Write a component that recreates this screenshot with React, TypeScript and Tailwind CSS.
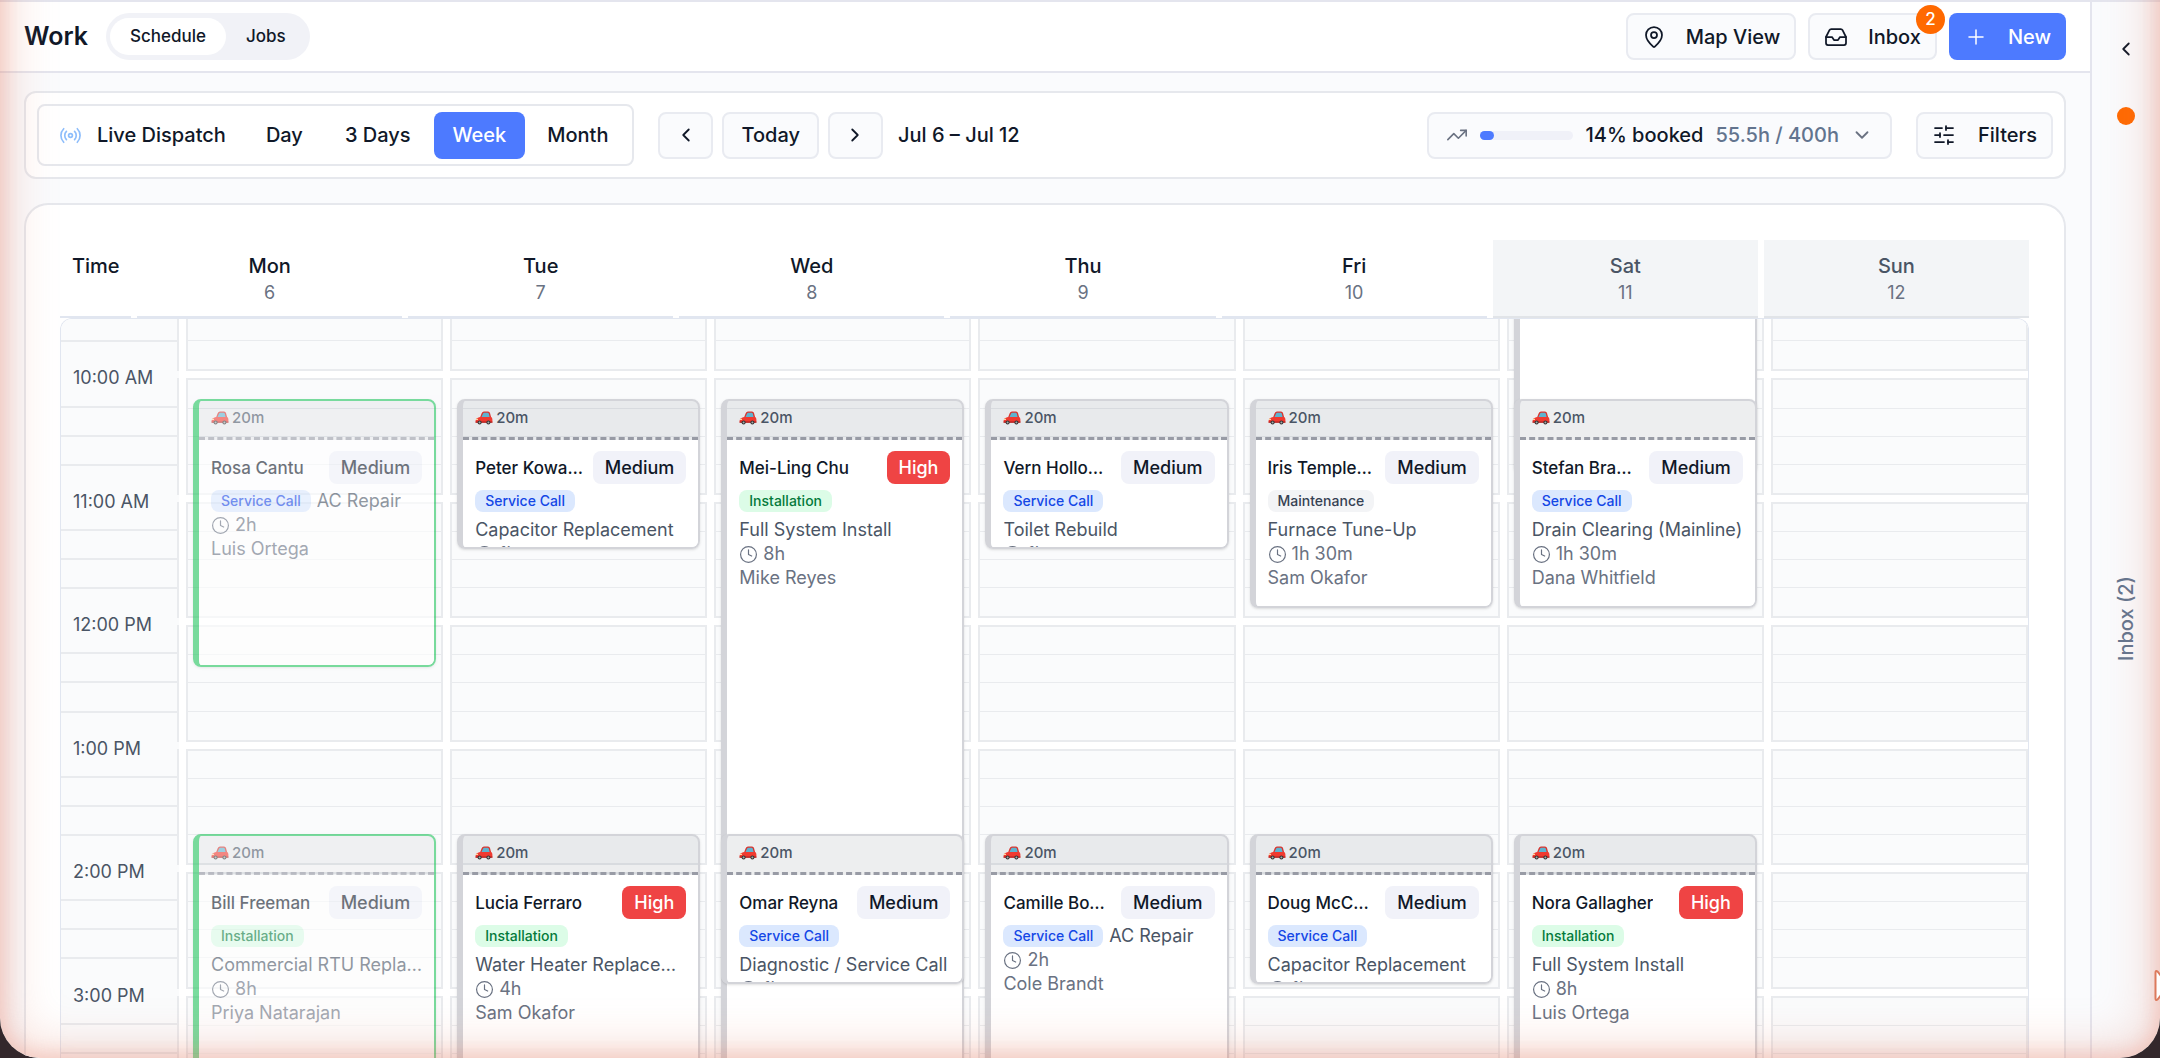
import type { ReactNode } from "react";
import { ChevronDown, ChevronLeft, ChevronRight, Clock, Inbox, MapPin, Plus, Radio, SlidersHorizontal, TrendingUp } from "lucide-react";

type Kind = "Service Call" | "Installation" | "Maintenance";

interface Job {
    customer: string;
    priority: "Medium" | "High";
    kind: Kind;
    title: string;
    inline?: boolean;
    tech: string;
    start: number;
    hours: number;
    done?: boolean;
}

interface Day {
    name: string;
    date: number;
    weekend?: boolean;
    jobs: Job[];
}

const FIRST_HOUR = 9;
const HOURS = 7;
const GRID_HEIGHT = 864;
const HOUR_HEIGHT = GRID_HEIGHT / HOURS;
const SLOTS_HEIGHT = 118;
const TRAVEL_HEIGHT = 41;

const days: Day[] = [
    {
        name: "Mon",
        date: 6,
        jobs: [
            { customer: "Rosa Cantu", priority: "Medium", kind: "Service Call", title: "AC Repair", inline: true, tech: "Luis Ortega", start: 10.5, hours: 2, done: true },
            { customer: "Bill Freeman", priority: "Medium", kind: "Installation", title: "Commercial RTU Replacement", tech: "Priya Natarajan", start: 14, hours: 8, done: true },
        ],
    },
    {
        name: "Tue",
        date: 7,
        jobs: [
            { customer: "Peter Kowarski", priority: "Medium", kind: "Service Call", title: "Capacitor Replacement", tech: "Mike Reyes", start: 10.5, hours: 1 },
            { customer: "Lucia Ferraro", priority: "High", kind: "Installation", title: "Water Heater Replacement", tech: "Sam Okafor", start: 14, hours: 4 },
        ],
    },
    {
        name: "Wed",
        date: 8,
        jobs: [
            { customer: "Mei-Ling Chu", priority: "High", kind: "Installation", title: "Full System Install", tech: "Mike Reyes", start: 10.5, hours: 8 },
            { customer: "Omar Reyna", priority: "Medium", kind: "Service Call", title: "Diagnostic / Service Call", tech: "Cole Brandt", start: 14, hours: 1 },
        ],
    },
    {
        name: "Thu",
        date: 9,
        jobs: [
            { customer: "Vern Hollomon", priority: "Medium", kind: "Service Call", title: "Toilet Rebuild", tech: "Dana Whitfield", start: 10.5, hours: 1 },
            { customer: "Camille Bowman", priority: "Medium", kind: "Service Call", title: "AC Repair", inline: true, tech: "Cole Brandt", start: 14, hours: 2 },
        ],
    },
    {
        name: "Fri",
        date: 10,
        jobs: [
            { customer: "Iris Templeman", priority: "Medium", kind: "Maintenance", title: "Furnace Tune-Up", tech: "Sam Okafor", start: 10.5, hours: 1.5 },
            { customer: "Doug McCormick", priority: "Medium", kind: "Service Call", title: "Capacitor Replacement", tech: "Luis Ortega", start: 14, hours: 1 },
        ],
    },
    {
        name: "Sat",
        date: 11,
        weekend: true,
        jobs: [
            { customer: "Hank Dillard", priority: "Medium", kind: "Installation", title: "Full System Install", tech: "Mike Reyes", start: 7, hours: 4 },
            { customer: "Stefan Brammer", priority: "Medium", kind: "Service Call", title: "Drain Clearing (Mainline)", tech: "Dana Whitfield", start: 10.5, hours: 1.5 },
            { customer: "Nora Gallagher", priority: "High", kind: "Installation", title: "Full System Install", tech: "Luis Ortega", start: 14, hours: 8 },
        ],
    },
    { name: "Sun", date: 12, weekend: true, jobs: [] },
];

const hours = Array.from({ length: HOURS }, (_, i) => FIRST_HOUR + i);

const kindClass: Record<Kind, string> = {
    "Service Call": "bg-[#dbe8fe] text-[#1447e6]",
    Installation: "bg-[#dcfce7] text-[#047a3b]",
    Maintenance: "bg-[#f3f4f6] text-[#364153]",
};

const formatHour = (h: number) => `${h > 12 ? h - 12 : h}:00 ${h < 12 ? "AM" : "PM"}`;

const formatDuration = (h: number) => (h % 1 ? `${Math.floor(h)}h 30m` : `${h}h`);

function OutlineButton({ children, className, label }: { children: ReactNode; className: string; label?: string }) {
    return (
        <button
            aria-label={label}
            className={`flex h-[47px] items-center rounded-lg border-2 border-[#e9ebf1] bg-[#fafbfd] text-[20px] font-medium ${className}`}
        >
            {children}
        </button>
    );
}

function CarIcon() {
    return (
        <svg viewBox="0 0 18 14" className="h-[14px] w-[18px]">
            <path d="M5 6.5 6.8 2Q7.4.5 9 .5h4Q14.6.5 15 2l1.2 4.5Z" fill="#d9352f" />
            <path d="M6.4 6.2 8 2.7Q8.4 1.8 9.2 1.8h3.5q.9 0 1.1.9l.9 3.5Z" fill="#5fb3cf" />
            <path d="M.6 9.5Q.8 7.2 3.5 6.6L5 6h11.2q1.2.7 1.2 2.4v3H.6Z" fill="#f03a30" />
            <path d="M.6 10.6h16.8v1.1H.6Z" fill="#b0201f" />
            <path d="M1 7.8h2V9H1Z" fill="#ffd9a0" />
            <circle cx="4.6" cy="11.5" r="2" fill="#333" />
            <circle cx="4.6" cy="11.5" r="1" fill="#aaa" />
            <circle cx="13.4" cy="11.5" r="2" fill="#333" />
            <circle cx="13.4" cy="11.5" r="1" fill="#aaa" />
        </svg>
    );
}

function JobCard({ job }: { job: Job }) {
    const fullHours = Math.floor(job.start - FIRST_HOUR);
    const top = Math.round(fullHours * HOUR_HEIGHT + (job.start % 1) * SLOTS_HEIGHT) + 3 - TRAVEL_HEIGHT;
    const height = TRAVEL_HEIGHT + job.hours * SLOTS_HEIGHT - 9;

    return (
        <div
            className={`absolute inset-x-[7px] flex flex-col overflow-hidden rounded-lg border-2 border-l-[6px] shadow-sm ${job.done ? "border-[#22c55e] opacity-60" : "border-[#d3d4d9]"}`}
            style={{ top, height }}
        >
            <div className="flex h-[39px] shrink-0 items-center gap-[3px] border-b-[3px] border-dashed border-[#989ba5] bg-[#1e2939]/8 px-3 pb-[2px] text-[15px] font-medium text-[#4a5565]">
                <CarIcon />
                20m
            </div>
            <div className="flex-1 bg-white px-3 pt-[11px] text-[18px] leading-6 text-[#6a7282]">
                <div className="mb-[5px] flex items-center justify-between gap-2">
                    <h3 className="truncate text-[17px] font-medium text-[#101828]">{job.customer}</h3>
                    <span
                        className={`flex h-[33px] shrink-0 items-center rounded-lg px-3 font-medium ${job.priority === "High" ? "bg-[#ef4444] text-white" : "bg-[#f1f2f9] text-[#101828]"}`}
                    >
                        {job.priority}
                    </span>
                </div>
                <div className={job.inline ? "flex items-center gap-[6px]" : "-mr-1"}>
                    <div className={`flex items-center ${job.inline ? "h-6" : "h-[29px] pb-[5px]"}`}>
                        <span className={`flex h-[22px] items-center rounded-lg px-[10px] text-[14px] font-medium ${kindClass[job.kind]}`}>{job.kind}</span>
                    </div>
                    <p className="truncate text-[#4a5565]">{job.title}</p>
                </div>
                <p className="flex items-center gap-[5px]">
                    <Clock className="size-[19px]" strokeWidth={1.5} />
                    {formatDuration(job.hours)}
                </p>
                <p className="truncate">{job.tech}</p>
            </div>
        </div>
    );
}

function DayColumn({ day }: { day: Day }) {
    return (
        <div className="relative grid min-w-0 flex-1 grid-rows-7">
            {hours.map((h) => (
                <div key={h} className="pb-[7px]">
                    <div className="grid h-full grid-rows-4 divide-y divide-[#e9ebee] border-2 border-[#e9ebee] bg-[#fafbfc]">
                        <div />
                        <div />
                        <div />
                        <div />
                    </div>
                </div>
            ))}
            {day.jobs.map((job) => (
                <JobCard key={job.customer} job={job} />
            ))}
        </div>
    );
}

function TimeColumn() {
    return (
        <div className="grid w-[118px] shrink-0 grid-rows-7 bg-[#fafbfc]">
            {hours.map((h) => (
                <div key={h} className="relative pb-[7px]">
                    <div className="grid h-full grid-rows-4 divide-y-2 divide-[#e9ebee] border-r-2 border-[#e9ebee]">
                        <div />
                        <div />
                        <div />
                        <div />
                    </div>
                    <span className="absolute -top-3 left-3 text-[18px] leading-6 text-[#4a5565]">{formatHour(h)}</span>
                </div>
            ))}
        </div>
    );
}

function TopBar() {
    return (
        <header className="flex h-[73px] shrink-0 items-center border-t-2 border-b-2 border-[#e4e5ee] bg-white px-6">
            <h1 className="text-[25px] font-semibold">Work</h1>
            <nav className="ml-[18px] flex h-[47px] items-center rounded-full bg-[#f1f2f7] p-1 text-[17px] font-medium">
                <a href="#schedule" className="flex h-[37px] items-center rounded-full bg-white px-5">
                    Schedule
                </a>
                <a href="#jobs" className="flex h-[37px] items-center rounded-full px-5">
                    Jobs
                </a>
            </nav>
            <div className="ml-auto flex gap-3">
                <OutlineButton className="gap-[20px] px-[14px]">
                    <MapPin className="size-6" strokeWidth={1.75} />
                    Map View
                </OutlineButton>
                <div className="relative">
                    <OutlineButton className="gap-[20px] px-[14px]">
                        <Inbox className="size-6" strokeWidth={1.75} />
                        Inbox
                    </OutlineButton>
                    <span className="absolute -top-2 -right-2 flex size-[29px] items-center justify-center rounded-full bg-[#ff6900] text-[17px] font-medium text-white">
                        2
                    </span>
                </div>
                <button className="flex h-[47px] items-center gap-[20px] rounded-lg bg-[#4d7aff] px-[15px] text-[20px] font-medium text-white">
                    <Plus className="size-6" strokeWidth={1.5} />
                    New
                </button>
            </div>
        </header>
    );
}

function Toolbar() {
    return (
        <section className="flex h-[88px] items-center rounded-xl border-2 border-[#e6e8ed] bg-white px-[11px] text-[20px] font-medium">
            <div className="flex h-[62px] items-center gap-1 rounded-lg border-2 border-[#e6e8ed] px-[6px]">
                <button className="flex h-[47px] items-center gap-[15px] pr-[17px] pl-[14px]">
                    <Radio className="size-[23px] text-[#8dbdfb]" strokeWidth={1.75} />
                    Live Dispatch
                </button>
                <button className="h-[47px] px-[19px]">Day</button>
                <button className="h-[47px] px-[19px]">3 Days</button>
                <button className="h-[47px] rounded-lg bg-[#4d7aff] px-[19px] text-white">Week</button>
                <button className="h-[47px] px-[18px]">Month</button>
            </div>
            <div className="ml-6 flex items-center gap-[9px]">
                <OutlineButton className="w-[55px] justify-center" label="Previous week">
                    <ChevronLeft className="size-[22px]" />
                </OutlineButton>
                <OutlineButton className="px-[17px]">Today</OutlineButton>
                <OutlineButton className="w-[55px] justify-center" label="Next week">
                    <ChevronRight className="size-[22px]" />
                </OutlineButton>
            </div>
            <span className="ml-[15px]">Jul 6 – Jul 12</span>
            <div className="ml-auto flex gap-6">
                <OutlineButton className="gap-3 px-[17px]">
                    <TrendingUp className="size-[22px] text-[#6a7282]" strokeWidth={1.75} />
                    <span className="h-[9px] w-[93px] rounded-full bg-[#f0f1f8]">
                        <span className="block h-full w-[14%] rounded-full bg-[#4d7aff]" />
                    </span>
                    <span>14% booked</span>
                    <span className="text-[#62748e]">55.5h / 400h</span>
                    <ChevronDown className="size-[22px] text-[#6a7282]" />
                </OutlineButton>
                <OutlineButton className="gap-[22px] px-[14px]">
                    <SlidersHorizontal className="size-6" strokeWidth={1.75} />
                    Filters
                </OutlineButton>
            </div>
        </section>
    );
}

function WeekCalendar() {
    return (
        <section className="flex min-h-0 flex-1 flex-col rounded-t-3xl border-2 border-b-0 border-[#e6e8ed] bg-white pt-[35px] pr-[35px] pl-[34px]">
            <div className="flex h-[78px] shrink-0 gap-[6px]">
                <div className="w-[71px] border-b-2 border-[#e1e6f0] pt-[14px] pl-3 text-[20px] leading-6 font-medium">Time</div>
                {days.map((day) => (
                    <div
                        key={day.name}
                        className={`flex-1 border-b-2 pt-[14px] text-center ${day.weekend ? "border-[#e1e4e8] bg-[#f3f5f7]" : "border-[#e1e6f0]"}`}
                    >
                        <div className={`text-[20px] leading-6 font-medium ${day.weekend ? "text-[#4a5565]" : ""}`}>{day.name}</div>
                        <div className="mt-[3px] text-[18px] leading-6 text-[#6a7282]">{day.date}</div>
                    </div>
                ))}
            </div>
            <div className="min-h-0 flex-1 overflow-hidden rounded-t-xl border border-b-0 border-[#e1e6f0]">
                <div className="-mt-[64px] flex h-[864px] gap-[7px]">
                    <TimeColumn />
                    {days.map((day) => (
                        <DayColumn key={day.name} day={day} />
                    ))}
                </div>
            </div>
        </section>
    );
}

export default function App() {
    return (
        <div className="h-screen bg-[#33272b] font-[Inter,sans-serif] text-[#101828]">
            <div className="relative flex h-full overflow-hidden rounded-b-[40px] bg-[#fafbfd]">
                <div className="flex min-w-0 flex-1 flex-col">
                    <TopBar />
                    <main className="flex min-h-0 flex-1 flex-col gap-6 px-6 pt-[18px]">
                        <Toolbar />
                        <WeekCalendar />
                    </main>
                </div>
                <aside className="flex w-[70px] shrink-0 flex-col items-center border-t-2 border-l-2 border-[#e4e5ee] pt-9">
                    <button aria-label="Expand inbox">
                        <ChevronLeft className="size-[22px]" />
                    </button>
                    <span className="mt-[47px] size-[18px] shrink-0 rounded-full bg-[#ff6900]" />
                    <div className="flex flex-1 items-center pt-[54px]">
                        <span className="rotate-180 text-[20px] font-medium text-[#62748e] [writing-mode:vertical-rl]">Inbox (2)</span>
                    </div>
                </aside>
                <div className="pointer-events-none absolute inset-x-0 -top-20 bottom-0 rounded-b-[40px] shadow-[inset_0_0_16px_6px_rgba(228,120,95,0.22),inset_0_0_48px_10px_rgba(228,130,105,0.28)]" />
                {/* remote pointer entering from the right edge */}
                <svg viewBox="0 0 6 34" className="pointer-events-none absolute right-0 bottom-[55px] h-[34px] w-[6px]">
                    <path d="M7 7 3.5 2.5Q1.5 1 1.5 4v25q0 3 2 1.5L7 26" fill="#fff" stroke="#dc7a5c" strokeWidth="2" />
                </svg>
            </div>
        </div>
    );
}
